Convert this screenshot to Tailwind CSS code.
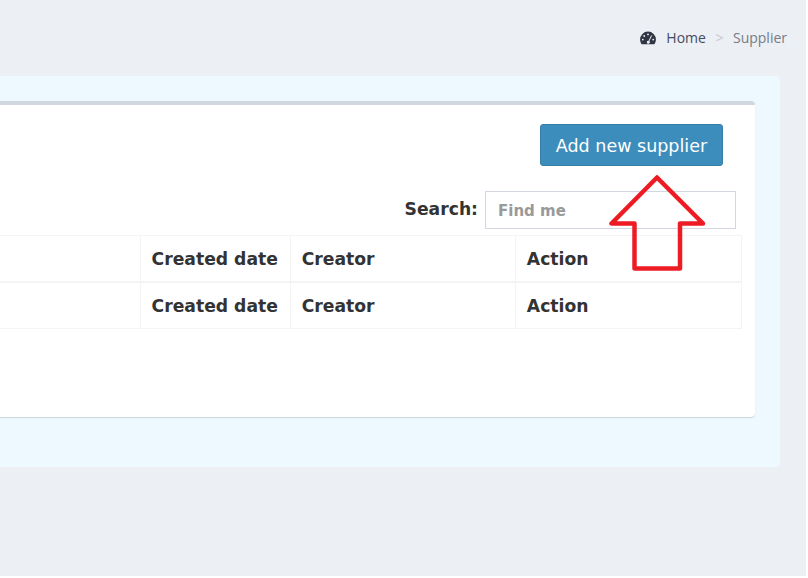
<!DOCTYPE html>
<html lang="en">
<head>
    <meta charset="UTF-8">
    <title>Supplier</title>
    <script src="https://cdn.jsdelivr.net/npm/@tailwindcss/browser@4"></script>
</head>
<body class="bg-white">
    <div class="relative w-[806px] h-[576px] overflow-hidden bg-[#eceff4] font-['DejaVu_Sans',sans-serif]">

        <!-- Breadcrumb -->
        <div class="h-[76px] pr-[19px] pt-[28px] flex justify-end items-start font-['Open_Sans',sans-serif] text-[14px] leading-[20px]">
            <svg class="w-[16px] h-[14px] mt-[3px] mr-[10px]" viewBox="0 0 16 14">
                <path fill="#2f3542" d="M8 .6A7.900 7.900 0 0 0 .1 8.500c0 1.600.5 3.100 1.400 4.400.2.300.5.400.8.400h11.400c.3 0 .6-.1.8-.4.900-1.300 1.400-2.800 1.400-4.400A7.900 7.900 0 0 0 8 .6z"/>
                <g fill="#eef1f5">
                    <circle cx="8" cy="3.400" r=".9"/>
                    <circle cx="4.200" cy="5" r=".9"/>
                    <circle cx="2.800" cy="8.600" r=".9"/>
                    <circle cx="13.200" cy="8.600" r=".9"/>
                    <path d="M11.200 4.300l.8.400-2.600 5.400a1.500 1.500 0 1 1-.8-.4z"/>
                </g>
            </svg>
            <span class="text-[#444c5c]">Home</span>
            <span class="text-[#c4c8cf] mx-[9.500px]">&gt;</span>
            <span class="text-[#777c85]">Supplier</span>
        </div>

        <!-- Panel -->
        <div class="w-[780px] h-[391px] pt-[25px] bg-[#edf8ff] rounded-r-[3px]">
            <div class="w-[755px] h-[316px] bg-white border-t-4 border-[#d2d6e0] rounded-r-[4px] shadow-[0_1px_1px_rgba(0,0,0,0.15)]">
                <div class="flex justify-end pt-[19px] pr-[32px]">
                    <button class="w-[183px] h-[42px] pt-[2px] bg-[#3c8dbc] border border-[#367fa9] rounded-[3px] text-white text-[17.500px]">Add new supplier</button>
                </div>
                <div class="flex justify-end items-center mt-[25px] pr-[19px] h-[38px]">
                    <label class="font-bold text-[#333] text-[17.200px] mr-[7px]">Search:</label>
                    <input class="w-[251px] h-[38px] pt-[2px] border border-[#d2d6e0] px-[12px] text-[15px] font-bold placeholder:text-[#999] outline-none" placeholder="Find me">
                </div>
                <table class="mt-[6px] w-[742px] table-fixed border-collapse text-[17.200px] font-bold text-[#333] text-left">
                    <colgroup>
                        <col class="w-[140px]">
                        <col class="w-[150px]">
                        <col class="w-[225px]">
                        <col class="w-[226px]">
                    </colgroup>
                    <thead>
                        <tr class="h-[46px]">
                            <th class="border border-[#f4f4f4] border-b-2 border-l-0"></th>
                            <th class="border border-[#f4f4f4] border-b-2 px-[11px] pt-[4px] font-bold">Created date</th>
                            <th class="border border-[#f4f4f4] border-b-2 px-[11px] pt-[4px] font-bold">Creator</th>
                            <th class="border border-[#f4f4f4] border-b-2 px-[11px] pt-[4px] font-bold">Action</th>
                        </tr>
                    </thead>
                    <tfoot>
                        <tr class="h-[47px]">
                            <th class="border border-[#f4f4f4] border-l-0"></th>
                            <th class="border border-[#f4f4f4] px-[11px] pt-[3px] font-bold">Created date</th>
                            <th class="border border-[#f4f4f4] px-[11px] pt-[3px] font-bold">Creator</th>
                            <th class="border border-[#f4f4f4] px-[11px] pt-[3px] font-bold">Action</th>
                        </tr>
                    </tfoot>
                </table>
            </div>
        </div>

        <!-- Red arrow annotation -->
        <svg class="absolute left-0 top-0 pointer-events-none" width="806" height="576">
            <path d="M657 177.500 L611.500 223.500 H634.500 V268.500 H680 V223.500 H703 Z" fill="none" stroke="#ed1c24" stroke-width="4.500" stroke-linejoin="round"/>
        </svg>
    </div>
</body>
</html>
